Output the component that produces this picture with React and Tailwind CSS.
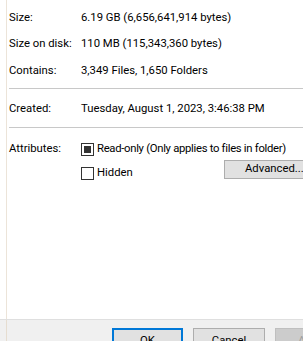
import React from 'react';

const font = { fontFamily: 'Roboto, "Liberation Sans", Arial, sans-serif' };

const Row = ({ label, children, className = '' }) => (
    <div className={`flex items-center ${className}`}>
        <span className="w-[72px] shrink-0">{label}</span>
        <span className="whitespace-nowrap">{children}</span>
    </div>
);

const Checkbox = ({ checked }) => (
    <span className="w-[13px] h-[13px] border border-[#333] bg-white flex items-center justify-center shrink-0">
        {checked && <span className="w-[7px] h-[7px] bg-[#333]" />}
    </span>
);

export default function App() {
    return (
        <div className="w-[303px] h-[341px] flex flex-col overflow-hidden bg-white text-[11.3px] text-black" style={font}>
            {/* --- GENERAL TAB CONTENT --- */}
            <div className="h-[320px] shrink-0 pl-[6px] border-b border-[#dfdfdf]">
                <div className="h-full border-l border-[#ece4d9] pl-[2px] pt-[5px]">
                    <Row label="Size:" className="h-[26px]">6.19 GB (6,656,641,914 bytes)</Row>
                    <Row label="Size on disk:" className="h-[27px]">110 MB (115,343,360 bytes)</Row>
                    <Row label="Contains:" className="h-[26px]">3,349 Files, 1,650 Folders</Row>

                    <div className="mt-[4px] h-px bg-[#c8c8c8]" />

                    <Row label="Created:" className="h-[20px] mt-[10px]">Tuesday, August 1, 2023, 3:46:38 PM</Row>

                    <div className="mt-[8px] h-px bg-[#c8c8c8]" />

                    <div className="flex mt-[13px]">
                        <span className="w-[72px] shrink-0 h-[17px] flex items-center">Attributes:</span>
                        <div className="flex-1 min-w-0">
                            <div className="flex items-center gap-[3px] h-[17px]">
                                <Checkbox checked />
                                <span className="whitespace-nowrap tracking-[-0.3px]">Read-only (Only applies to files in folder)</span>
                            </div>
                            <div className="flex items-start mt-[2px]">
                                <div className="flex items-center gap-[3px] h-[18px] mt-[4px]">
                                    <Checkbox />
                                    <span>Hidden</span>
                                </div>
                                <button className="ml-auto w-[84px] h-[19px] mr-[-5px] shrink-0 bg-[#e1e1e1] border border-[#adadad] text-left pl-[20px] whitespace-nowrap">
                                    Advanced...
                                </button>
                            </div>
                        </div>
                    </div>
                </div>
            </div>

            {/* --- DIALOG BUTTONS --- */}
            <div className="flex-1 min-h-0 overflow-hidden bg-[#f0f0f0] pl-[6px]">
                <div className="h-full border-l border-[#e6ddd0] flex items-start pt-[8px] pl-[105px] gap-[10px]">
                    <button className="w-[71px] h-[23px] shrink-0 bg-[#e1e1e1] border-2 border-[#0078d7] pt-[3px]">OK</button>
                    <button className="w-[72px] h-[23px] shrink-0 bg-[#e1e1e1] border border-[#adadad] pt-[4px]">Cancel</button>
                    <button className="w-[72px] h-[23px] shrink-0 bg-[#cccccc] border border-[#bfbfbf] text-[#a0a0a0] pt-[4px] pl-[22px] text-left">Apply</button>
                </div>
            </div>
        </div>
    );
}
